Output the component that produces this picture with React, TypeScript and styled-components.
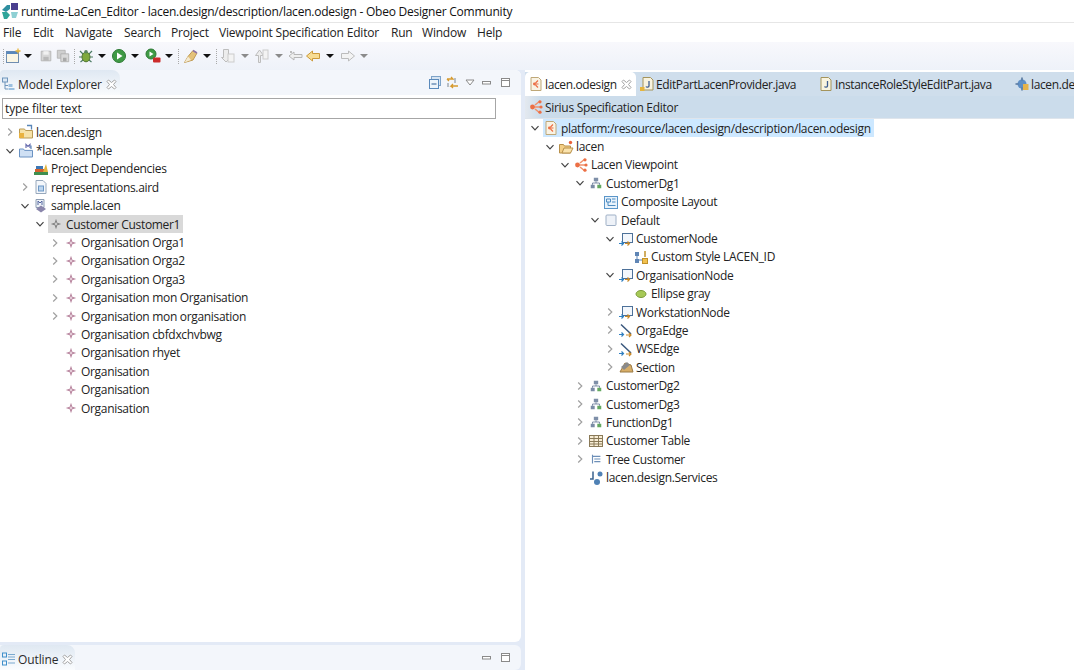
import React from "react";
import styled, { createGlobalStyle } from "styled-components";

const GlobalStyle = createGlobalStyle`
  html, body { margin: 0; padding: 0; background: #fff; }
  body { font-family: "Open Sans", "Liberation Sans", sans-serif; color: #1d1d1d; }
`;

const Window = styled.div`
  width: 1074px;
  height: 670px;
  display: flex;
  flex-direction: column;
  overflow: hidden;
  background: #e3eaf6;
`;

const TitleBar = styled.div`
  height: 22px;
  display: flex;
  align-items: center;
  gap: 2px;
  padding-left: 1px;
  background: #fff;
  font-size: 12px;
  letter-spacing: -0.23px;
  color: #111;
  white-space: nowrap;
`;

const MenuBar = styled.div`
  height: 19px;
  display: flex;
  align-items: center;
  padding-left: 3px;
  background: #fff;
  border-top: 1px solid #e6e6e6;
  font-size: 12px;
  letter-spacing: -0.2px;
  color: #222;
`;

const MenuItem = styled.span<{ $w: number }>`
  width: ${(p) => p.$w}px;
  white-space: nowrap;
`;

const Toolbar = styled.div`
  height: 28px;
  display: flex;
  align-items: center;
  background: linear-gradient(#f8f8fc, #eef2f9);
`;

const ToolSlot = styled.div<{ $w: number }>`
  width: ${(p) => p.$w}px;
  height: 16px;
  flex: none;
  display: flex;
  align-items: center;
  justify-content: center;
`;

const Separator = styled.div`
  width: 0;
  height: 15px;
  border-left: 1px dotted #a9a9a9;
`;

const DropArrow = styled.div<{ $off?: boolean }>`
  width: 0;
  height: 0;
  border-left: 4px solid transparent;
  border-right: 4px solid transparent;
  border-top: 4px solid ${(p) => (p.$off ? "#8b8b8b" : "#111")};
`;

const Workbench = styled.div`
  flex: 1;
  min-height: 0;
  display: flex;
  gap: 4px;
`;

const LeftColumn = styled.div`
  width: 521px;
  flex: none;
  display: flex;
  flex-direction: column;
  gap: 3px;
`;

const Panel = styled.section<{ $fill?: boolean }>`
  display: flex;
  flex-direction: column;
  flex: ${(p) => (p.$fill ? "1" : "none")};
  min-height: 0;
  min-width: 0;
  background: #fff;
  border-top-right-radius: 6px;
  border-bottom-right-radius: 6px;
  overflow: hidden;
`;

const ViewHeader = styled.div`
  height: 25px;
  flex: none;
  display: flex;
  align-items: stretch;
  background: #f3f6fb;
`;

const ViewTab = styled.div<{ $w: number }>`
  width: ${(p) => p.$w}px;
  flex: none;
  display: flex;
  align-items: center;
  gap: 1px;
  padding: 3px 0 0 1px;
  box-sizing: border-box;
  border-top-right-radius: 8px;
  border-top-left-radius: 4px;
  background: linear-gradient(#dfe8f2, #fafcfe);
  font-size: 12px;
  letter-spacing: -0.1px;
  color: #2b2b2b;
  white-space: nowrap;
`;

const ViewActions = styled.div`
  margin-left: auto;
  padding-right: 3px;
  display: flex;
  align-items: center;
`;

const ActionSlot = styled.div<{ $w: number }>`
  width: ${(p) => p.$w}px;
  display: flex;
  justify-content: center;
`;

const CloseMark = styled.span`
  margin-left: 3px;
  display: flex;
`;

const FilterRow = styled.div`
  padding: 3px 25px 0 2px;
  flex: none;
`;

const FilterInput = styled.div`
  height: 19px;
  border: 1px solid #a6a6a6;
  padding-left: 2px;
  font-size: 12px;
  line-height: 20px;
  letter-spacing: -0.1px;
  color: #222;
`;

const TreeList = styled.div<{ $top: number }>`
  padding-top: ${(p) => p.$top}px;
  flex: 1;
  min-height: 0;
`;

const Row = styled.div<{ $level: number; $base: number }>`
  height: 18.4px;
  display: flex;
  align-items: center;
  padding-left: ${(p) => p.$base + p.$level * 15}px;
  font-size: 12px;
  letter-spacing: -0.31px;
  color: #232323;
  white-space: nowrap;
`;

const Twisty = styled.span`
  width: 12px;
  height: 12px;
  margin-right: 2px;
  flex: none;
  display: flex;
  align-items: center;
  justify-content: center;
`;

const RowBody = styled.span<{ $sel?: "gray" | "blue" }>`
  display: flex;
  align-items: center;
  gap: 3px;
  height: 18px;
  padding: 0 3px 0 1px;
  background: ${(p) =>
    p.$sel === "gray" ? "#d9d9d9" : p.$sel === "blue" ? "#cde8ff" : "transparent"};
`;

const RowIcon = styled.span`
  width: 14px;
  flex: none;
  display: flex;
  justify-content: center;
`;

const EditorArea = styled.section`
  flex: 1;
  min-width: 0;
  display: flex;
  flex-direction: column;
  background: #fff;
  overflow: hidden;
`;

const TabStrip = styled.div`
  height: 24px;
  margin-top: 2px;
  flex: none;
  display: flex;
  background: #cfdeec;
`;

const EditorTab = styled.div<{ $active?: boolean; $w: number }>`
  width: ${(p) => p.$w}px;
  flex: none;
  display: flex;
  align-items: center;
  gap: 1px;
  padding-left: 3px;
  box-sizing: border-box;
  font-size: 12px;
  letter-spacing: -0.38px;
  color: #222;
  white-space: nowrap;
  background: ${(p) => (p.$active ? "#fff" : "transparent")};
  border-top-left-radius: ${(p) => (p.$active ? 5 : 0)}px;
  border-top-right-radius: ${(p) => (p.$active ? 5 : 0)}px;
`;

const FormHeader = styled.div`
  height: 22px;
  flex: none;
  display: flex;
  align-items: center;
  gap: 1px;
  padding-left: 3px;
  background: linear-gradient(90deg, #e4e9ef 0, #cbdceb 16px, #cbdceb 100%);
  border-bottom: 1px solid #dfe5ec;
  font-size: 12px;
  letter-spacing: -0.3px;
  color: #222;
`;

const Ic = ({ children, size = 16 }: { children: React.ReactNode; size?: number }) => (
  <svg width={size} height={size} viewBox="0 0 16 16" style={{ flex: "none" }}>
    {children}
  </svg>
);

const Chevron = ({ open }: { open?: boolean }) => (
  <svg width="10" height="10" viewBox="0 0 10 10">
    <path
      d={open ? "M1.5 3.2 5 6.8 8.5 3.2" : "M3.2 1.5 6.8 5 3.2 8.5"}
      fill="none"
      stroke={open ? "#444" : "#a0a0a0"}
      strokeWidth="1.2"
    />
  </svg>
);

const Sirius = () => (
  <Ic>
    <path d="M12 2 7 6M12 14 7 10M3 8h9" stroke="#f0916c" strokeWidth="1.6" fill="none" />
    <circle cx="4.5" cy="8" r="2.4" fill="#ec6f45" />
    <circle cx="12" cy="2.8" r="1.6" fill="#ec6f45" />
    <circle cx="13" cy="8" r="1.6" fill="#ec6f45" />
    <circle cx="12" cy="13.2" r="1.6" fill="#ec6f45" />
  </Ic>
);

const STAR = "M8 2 9.5 6.5 14 8 9.5 9.5 8 14 6.5 9.5 2 8 6.5 6.5z";

const icons: Record<string, React.ReactNode> = {
  project: (
    <Ic>
      <path d="M1.5 5h5l1 1.5h7V14h-13z" fill="#f6e2a8" stroke="#b99a55" />
      <path d="M9 1.5h4.500v4" fill="none" stroke="#5a86b8" strokeWidth="1.3" />
      <rect x="1" y="9" width="5" height="5" fill="#e9b23f" />
    </Ic>
  ),
  modelProject: (
    <Ic>
      <path d="M1.5 6h4l1 1.4h8V14h-13z" fill="#cfe0f4" stroke="#6a92c2" />
      <path d="M8 5V1.500l2 2 2-2V5" fill="none" stroke="#6a6fb0" strokeWidth="1.2" />
      <path d="M13 2.500V6" stroke="#5a86b8" strokeWidth="1.2" />
    </Ic>
  ),
  deps: (
    <Ic>
      <rect x="1" y="11" width="14" height="3" fill="#3f8f4f" />
      <rect x="2" y="8" width="9" height="3" fill="#d4622f" />
      <rect x="3" y="5" width="7" height="3" fill="#3d77b5" />
      <path d="M10 11 13 3l2 8z" fill="#e3b33a" />
    </Ic>
  ),
  aird: (
    <Ic>
      <path d="M3 1.5h7l3 3v10H3z" fill="#f4f7fb" stroke="#97a8bc" />
      <rect x="5.5" y="7" width="5" height="5" fill="#bcd5ee" stroke="#6c97c5" />
    </Ic>
  ),
  model: (
    <Ic>
      <path d="M3 1.5h8v8H3z" fill="#eef2f7" stroke="#8c9db3" />
      <path d="M5 7V3l2 2 2-2v4" fill="none" stroke="#5566a0" />
      <path d="M8 7.5 13 11l-5 3.5L3 11z" fill="#8a86ab" />
    </Ic>
  ),
  customer: (
    <Ic size={14}>
      <path d={STAR} fill="#7d7d7d" />
      <circle cx="8" cy="8" r="1.6" fill="#c9c9c9" />
    </Ic>
  ),
  orga: (
    <Ic size={14}>
      <path d={STAR} fill="#b5809b" />
      <circle cx="8" cy="8" r="1.6" fill="#e4cbd7" />
    </Ic>
  ),
  odesign: (
    <Ic>
      <path d="M3 1.5h7.500L13 4v10.500H3z" fill="#f9f3e4" stroke="#bfa878" />
      <path d="M10 4.500 7.500 7M10 11.500 7.500 9M6 8h4.500" stroke="#ec6f45" strokeWidth="1.2" />
      <circle cx="6.4" cy="8" r="1.4" fill="#ec6f45" />
    </Ic>
  ),
  folder: (
    <Ic>
      <path d="M1.5 5.500h4l1 1.500h6V14h-11z" fill="#f3cf87" stroke="#b8904a" />
      <path d="M4 14 6 9h9l-2.500 5z" fill="#fae3ad" stroke="#b8904a" />
      <circle cx="12.5" cy="3.5" r="1.7" fill="#e8623a" />
    </Ic>
  ),
  sirius: <Sirius />,
  diagram: (
    <Ic size={14}>
      <rect x="5.5" y="2" width="5" height="4" fill="#7e8fa8" />
      <rect x="2" y="10" width="4.5" height="4" fill="#7a8ba5" />
      <rect x="9.5" y="10" width="4.5" height="4" fill="#63a860" />
      <path d="M4 10V8h8v2M8 6v2" fill="none" stroke="#6d7f9b" />
    </Ic>
  ),
  layout: (
    <Ic>
      <rect x="1.5" y="2.5" width="13" height="12" fill="#e8f2fb" stroke="#5b96c9" />
      <path d="M3.500 5h4v3h-4zM9 5h3.500M9 8h3.500M5 8v3.500h7.500" fill="none" stroke="#4d8cc2" />
    </Ic>
  ),
  layer: (
    <Ic>
      <rect x="3" y="3" width="10" height="10.5" rx="1" fill="#eef2f8" stroke="#9fb0c6" />
    </Ic>
  ),
  node: (
    <Ic>
      <rect x="4.5" y="2.5" width="10" height="9" fill="#f3f7fc" stroke="#4d7199" />
      <path d="M1 12.500h4M3.500 10.500 5.500 12.500 3.500 14.500" fill="none" stroke="#2f7fc1" strokeWidth="1.2" />
      <path d="M7 12.500h4M9.500 10.500 11.500 12.500 9.500 14.500" fill="none" stroke="#c98a2a" strokeWidth="1.2" />
    </Ic>
  ),
  customStyle: (
    <Ic>
      <rect x="2" y="3" width="4" height="4" fill="#5f85b5" />
      <rect x="2" y="10" width="4" height="4" fill="#5f85b5" />
      <path d="M4 7v3M6 11h3" stroke="#5f85b5" />
      <rect x="9.5" y="9.5" width="5" height="5" fill="#f2c14e" stroke="#c1922c" />
      <path d="M12 2v6" stroke="#c1922c" strokeWidth="1.5" />
    </Ic>
  ),
  ellipse: (
    <Ic>
      <ellipse cx="8" cy="8" rx="5" ry="3.5" fill="#a7c957" stroke="#7b9c3a" />
    </Ic>
  ),
  edge: (
    <Ic>
      <path d="M3 2.500 13 12" stroke="#39577d" strokeWidth="1.5" />
      <path d="M1 12.500h4M3.500 10.500 5.500 12.500 3.500 14.500" fill="none" stroke="#2f7fc1" strokeWidth="1.2" />
      <path d="M8 13h5M11 11 13 13 11 15" fill="none" stroke="#c98a2a" strokeWidth="1.2" />
    </Ic>
  ),
  section: (
    <Ic>
      <path d="M2 13 7 4l6 2 2 7z" fill="#d8ae68" stroke="#9a7a45" />
      <path d="M3 8 9 3l3 3-6 5z" fill="#8a8a8a" />
    </Ic>
  ),
  table: (
    <Ic>
      <rect x="1.5" y="2.5" width="13" height="11" fill="#f8edd5" stroke="#8a7a58" />
      <path d="M1.500 5.500h13M1.500 8.500h13M1.500 11h13M6 2.500v11M10.500 2.500v11" stroke="#8a7a58" />
    </Ic>
  ),
  tree: (
    <Ic size={14}>
      <path d="M4 3v10M4 5h9M6 8h7M6 11h7" stroke="#6d8fb8" strokeWidth="1.3" fill="none" />
    </Ic>
  ),
  services: (
    <Ic>
      <circle cx="9" cy="12" r="3" fill="#4f81b5" />
      <circle cx="12" cy="4" r="2.5" fill="#4f81b5" />
      <path d="M5 1.500v7.500H2" stroke="#39618f" strokeWidth="1.5" fill="none" />
    </Ic>
  ),
  outlineView: (
    <Ic>
      <rect x="1.5" y="2" width="4" height="4" fill="none" stroke="#3f8fcb" />
      <rect x="1.5" y="10" width="4" height="4" fill="none" stroke="#3f8fcb" />
      <path d="M7 3.500h7M7 6h7M7 8.500h7M7 12h7" stroke="#7aa9cf" />
    </Ic>
  ),
  explorer: (
    <Ic>
      <rect x="1.5" y="2" width="5" height="4" fill="#dce8f4" stroke="#6f95bb" />
      <path d="M4 6v7h3M4 9.500h3" stroke="#6f95bb" fill="none" />
      <rect x="7.5" y="8" width="4" height="3" fill="#9cc0e0" />
      <rect x="7.5" y="12" width="6" height="2" fill="#9cc0e0" />
    </Ic>
  ),
  java: (
    <Ic>
      <path d="M3 1.500h7.500L13 4v10.500H3z" fill="#f8f3df" stroke="#a4945c" />
      <path d="M9.500 5v5c0 1.500-2.500 1.500-3 .5" fill="none" stroke="#3d5c90" strokeWidth="1.3" />
    </Ic>
  ),
  javaWarn: (
    <Ic>
      <path d="M4 1.500h7.500L14 4v10H4z" fill="#f8f3df" stroke="#a4945c" />
      <path d="M10 5v5c0 1.500-2.500 1.500-3 .5" fill="none" stroke="#3d5c90" strokeWidth="1.3" />
      <rect x="1" y="11" width="4.5" height="4" fill="#e5b53f" />
    </Ic>
  ),
  plugin: (
    <Ic>
      <circle cx="8" cy="8" r="4.5" fill="#5f8fc5" />
      <path d="M8 1.500v3M8 11.500v3M1.500 8h3" stroke="#54769e" strokeWidth="1.6" />
      <rect x="9" y="8" width="5.5" height="6" fill="#e6b34a" />
    </Ic>
  ),
};

const CloseIcon = () => (
  <svg width="11" height="11" viewBox="0 0 11 11">
    <path
      d="M1 2.500 2.500 1 5.500 3.500 8.500 1 10 2.500 7.500 5.500 10 8.500 8.500 10 5.500 7.500 2.500 10 1 8.500 3.500 5.500z"
      fill="#fff"
      stroke="#a2a2a2"
    />
  </svg>
);

const MinIcon = () => (
  <svg width="11" height="8" viewBox="0 0 11 8">
    <rect x="1.5" y="2.5" width="8" height="2.5" fill="#fff" stroke="#8a8a8a" />
  </svg>
);

const MaxIcon = () => (
  <svg width="11" height="11" viewBox="0 0 11 11">
    <rect x="1.5" y="1.5" width="8" height="8" fill="#fff" stroke="#8a8a8a" />
    <path d="M1.500 3.500h8" stroke="#8a8a8a" />
  </svg>
);

const ViewMenuIcon = () => (
  <svg width="10" height="7" viewBox="0 0 10 7">
    <path d="M1 1h8L5 6z" fill="#fff" stroke="#8a8a8a" />
  </svg>
);

const toolIcons: Record<string, React.ReactNode> = {
  newFile: (
    <Ic>
      <rect x="1.5" y="3.5" width="12" height="11" fill="#fbf6e4" stroke="#6f8db0" />
      <path d="M1.500 3.500h12v2.500h-12z" fill="#5a88bc" />
      <path d="M13 .5v5M10.500 3h5" stroke="#e7b53c" strokeWidth="1.3" />
    </Ic>
  ),
  save: (
    <Ic size={14}>
      <path d="M2.500 2.500h11v11h-11z" fill="#d6d6d6" stroke="#b4b4b4" />
      <rect x="5" y="2.5" width="6" height="4" fill="#f1f1f1" />
      <rect x="5" y="9" width="6" height="4.5" fill="#b9b9b9" />
    </Ic>
  ),
  saveAll: (
    <Ic size={14}>
      <path d="M1.500 1.500h9v9h-9z" fill="#cfcfcf" stroke="#b4b4b4" />
      <path d="M5.500 5.500h9v9h-9z" fill="#d9d9d9" stroke="#b0b0b0" />
      <rect x="8" y="10" width="4" height="4" fill="#a9a9a9" />
    </Ic>
  ),
  debug: (
    <Ic>
      <path d="M2 3 5 6M14 3 11 6M1 9h3M12 9h3M2.500 14 5 12M13.500 14 11 12" stroke="#4b7a63" strokeWidth="1.2" />
      <ellipse cx="8" cy="9" rx="4" ry="4.8" fill="#7fa93d" stroke="#4d7430" />
      <circle cx="8" cy="3.8" r="1.8" fill="#5a8560" />
    </Ic>
  ),
  run: (
    <Ic>
      <circle cx="8" cy="8" r="6.5" fill="#3f9a45" stroke="#2e7a35" />
      <path d="M6 4.500v7L11.500 8z" fill="#fff" />
    </Ic>
  ),
  runExt: (
    <Ic>
      <circle cx="6" cy="6" r="5" fill="#3f9a45" stroke="#2e7a35" />
      <path d="M4.500 3.500v5L8.500 6z" fill="#fff" />
      <rect x="8" y="9.5" width="7.5" height="5" rx="1" fill="#cc2b2b" />
    </Ic>
  ),
  marker: (
    <Ic>
      <path d="M1.500 14.500 5 8.500l5-6 4 2.500-4 7z" fill="#e4c27a" stroke="#c09a52" />
      <path d="M1.500 14.500 5 8.500 8 12z" fill="#f4ead2" />
      <path d="M10 2.500l4 2.500" stroke="#8f74a8" strokeWidth="1.5" />
    </Ic>
  ),
  nextAnn: (
    <Ic>
      <path d="M4.500 1.500h5v8h2L7 14 2.500 9.500h2z" fill="#ededed" stroke="#bdbdbd" />
      <rect x="9" y="6" width="6" height="8" fill="#f3f3f3" stroke="#ccc" />
    </Ic>
  ),
  prevAnn: (
    <Ic>
      <path d="M5.500 14.500v-7h-3L6.500 2l4 5.500h-3v7z" fill="#ededed" stroke="#bdbdbd" />
      <rect x="10" y="2" width="5" height="9" fill="#f3f3f3" stroke="#ccc" />
    </Ic>
  ),
  lastEdit: (
    <Ic>
      <path d="M1 8l5-4v2.500h8v3H6V12z" fill="#efefef" stroke="#b6b6b6" />
      <path d="M2 3h2v2H2z" fill="#bdbdbd" />
    </Ic>
  ),
  back: (
    <Ic>
      <path d="M1.500 8 7.500 3v2.500h7v5h-7V13z" fill="#f7dc93" stroke="#cc9a3a" />
    </Ic>
  ),
  forward: (
    <Ic>
      <path d="M14.500 8 8.500 3v2.500h-7v5h7V13z" fill="#f3f3f3" stroke="#bcbcbc" />
    </Ic>
  ),
};

type Tool = { w: number; icon?: string; sep?: boolean; arrow?: boolean; off?: boolean };

const tools: Tool[] = [
  { w: 6, sep: true },
  { w: 14, icon: "newFile" },
  { w: 16, arrow: true },
  { w: 20, icon: "save" },
  { w: 14, icon: "saveAll" },
  { w: 8, sep: true },
  { w: 16, icon: "debug" },
  { w: 16, arrow: true },
  { w: 18, icon: "run" },
  { w: 14, arrow: true },
  { w: 22, icon: "runExt" },
  { w: 10, arrow: true },
  { w: 8, sep: true },
  { w: 18, icon: "marker" },
  { w: 14, arrow: true },
  { w: 4, sep: true },
  { w: 18, icon: "nextAnn" },
  { w: 18, arrow: true, off: true },
  { w: 14, icon: "prevAnn" },
  { w: 22, arrow: true, off: true },
  { w: 12, icon: "lastEdit" },
  { w: 22, icon: "back" },
  { w: 12, arrow: true },
  { w: 24, icon: "forward" },
  { w: 8, arrow: true, off: true },
];

const menus: [string, number][] = [
  ["File", 30],
  ["Edit", 32],
  ["Navigate", 59],
  ["Search", 47],
  ["Project", 48],
  ["Viewpoint Specification Editor", 172],
  ["Run", 31],
  ["Window", 55],
  ["Help", 40],
];

type Node = {
  level: number;
  label: string;
  icon?: string;
  twisty?: "open" | "closed";
  sel?: "gray" | "blue";
};

const orga = (label: string, closed = true): Node => ({
  level: 3,
  label,
  icon: "orga",
  twisty: closed ? "closed" : undefined,
});

const explorerTree: Node[] = [
  { level: 0, label: "lacen.design", icon: "project", twisty: "closed" },
  { level: 0, label: "*lacen.sample", icon: "modelProject", twisty: "open" },
  { level: 1, label: "Project Dependencies", icon: "deps" },
  { level: 1, label: "representations.aird", icon: "aird", twisty: "closed" },
  { level: 1, label: "sample.lacen", icon: "model", twisty: "open" },
  { level: 2, label: "Customer Customer1", icon: "customer", twisty: "open", sel: "gray" },
  orga("Organisation Orga1"),
  orga("Organisation Orga2"),
  orga("Organisation Orga3"),
  orga("Organisation mon Organisation"),
  orga("Organisation mon organisation"),
  orga("Organisation cbfdxchvbwg", false),
  orga("Organisation rhyet", false),
  orga("Organisation", false),
  orga("Organisation", false),
  orga("Organisation", false),
];

const specTree: Node[] = [
  { level: 0, label: "platform:/resource/lacen.design/description/lacen.odesign", icon: "odesign", twisty: "open", sel: "blue" },
  { level: 1, label: "lacen", icon: "folder", twisty: "open" },
  { level: 2, label: "Lacen Viewpoint", icon: "sirius", twisty: "open" },
  { level: 3, label: "CustomerDg1", icon: "diagram", twisty: "open" },
  { level: 4, label: "Composite Layout", icon: "layout" },
  { level: 4, label: "Default", icon: "layer", twisty: "open" },
  { level: 5, label: "CustomerNode", icon: "node", twisty: "open" },
  { level: 6, label: "Custom Style LACEN_ID", icon: "customStyle" },
  { level: 5, label: "OrganisationNode", icon: "node", twisty: "open" },
  { level: 6, label: "Ellipse gray", icon: "ellipse" },
  { level: 5, label: "WorkstationNode", icon: "node", twisty: "closed" },
  { level: 5, label: "OrgaEdge", icon: "edge", twisty: "closed" },
  { level: 5, label: "WSEdge", icon: "edge", twisty: "closed" },
  { level: 5, label: "Section", icon: "section", twisty: "closed" },
  { level: 3, label: "CustomerDg2", icon: "diagram", twisty: "closed" },
  { level: 3, label: "CustomerDg3", icon: "diagram", twisty: "closed" },
  { level: 3, label: "FunctionDg1", icon: "diagram", twisty: "closed" },
  { level: 3, label: "Customer Table", icon: "table", twisty: "closed" },
  { level: 3, label: "Tree Customer", icon: "tree", twisty: "closed" },
  { level: 3, label: "lacen.design.Services", icon: "services" },
];

const Tree = ({ nodes, base, top }: { nodes: Node[]; base: number; top: number }) => (
  <TreeList $top={top}>
    {nodes.map((n, i) => (
      <Row key={i} $level={n.level} $base={base}>
        <Twisty>{n.twisty && <Chevron open={n.twisty === "open"} />}</Twisty>
        <RowBody $sel={n.sel}>
          <RowIcon>{n.icon && icons[n.icon]}</RowIcon>
          <span>{n.label}</span>
        </RowBody>
      </Row>
    ))}
  </TreeList>
);

const Logo = () => (
  <svg width="18" height="18" viewBox="0 0 18 18" style={{ flex: "none" }}>
    <rect x="10" y="1" width="7" height="7" fill="#4a3f8f" />
    <path d="M1 8 6 3h3v4L5 10z" fill="#2f8fa0" />
    <path d="M1 10h5l3 3-3 4H3z" fill="#2fa59a" />
    <path d="M10 10h7l-2 6h-4z" fill="#8fd0d4" />
  </svg>
);

const App = () => (
  <Window>
    <GlobalStyle />
    <TitleBar>
      <Logo />
      runtime-LaCen_Editor - lacen.design/description/lacen.odesign - Obeo Designer Community
    </TitleBar>
    <MenuBar>
      {menus.map(([m, w]) => (
        <MenuItem key={m} $w={w}>
          {m}
        </MenuItem>
      ))}
    </MenuBar>
    <Toolbar>
      {tools.map((t, i) => (
        <ToolSlot key={i} $w={t.w}>
          {t.sep && <Separator />}
          {t.arrow && <DropArrow $off={t.off} />}
          {t.icon && toolIcons[t.icon]}
        </ToolSlot>
      ))}
    </Toolbar>
    <Workbench>
      <LeftColumn>
        <Panel $fill>
          <ViewHeader>
            <ViewTab $w={120}>
              {icons.explorer}
              Model Explorer
              <CloseMark>
                <CloseIcon />
              </CloseMark>
            </ViewTab>
            <ViewActions>
              <ActionSlot $w={19}>
                <svg width="12" height="13" viewBox="0 0 12 13">
                  <rect x="2.5" y=".5" width="9" height="9" fill="#d6e4f2" stroke="#7ea3c8" />
                  <rect x=".5" y="3.5" width="9" height="9" fill="#eef4fa" stroke="#5b8abb" />
                  <path d="M2.500 8h5" stroke="#2c5f95" />
                </svg>
              </ActionSlot>
              <ActionSlot $w={16}>
                <svg width="13" height="14" viewBox="0 0 13 14">
                  <path d="M1 3h6L5 1M1 3l2 2" fill="none" stroke="#d69a2e" strokeWidth="1.3" />
                  <path d="M12 10H5l2-2M5 10l2 2" fill="none" stroke="#d69a2e" strokeWidth="1.3" />
                  <path d="M9 2v5M2 7v4" stroke="#7b8794" />
                </svg>
              </ActionSlot>
              <ActionSlot $w={20}>
                <ViewMenuIcon />
              </ActionSlot>
              <ActionSlot $w={13}>
                <MinIcon />
              </ActionSlot>
              <ActionSlot $w={25}>
                <MaxIcon />
              </ActionSlot>
            </ViewActions>
          </ViewHeader>
          <FilterRow>
            <FilterInput>type filter text</FilterInput>
          </FilterRow>
          <Tree nodes={explorerTree} base={4} top={4} />
        </Panel>
        <Panel>
          <ViewHeader>
            <ViewTab $w={75}>
              {icons.outlineView}
              Outline
              <CloseMark>
                <CloseIcon />
              </CloseMark>
            </ViewTab>
            <ViewActions>
              <ActionSlot $w={13}>
                <MinIcon />
              </ActionSlot>
              <ActionSlot $w={25}>
                <MaxIcon />
              </ActionSlot>
            </ViewActions>
          </ViewHeader>
        </Panel>
      </LeftColumn>
      <EditorArea>
        <TabStrip>
          <EditorTab $active $w={111}>
            {icons.odesign}
            lacen.odesign
            <CloseMark>
              <CloseIcon />
            </CloseMark>
          </EditorTab>
          <EditorTab $w={179}>
            {icons.javaWarn}
            EditPartLacenProvider.java
          </EditorTab>
          <EditorTab $w={196}>
            {icons.java}
            InstanceRoleStyleEditPart.java
          </EditorTab>
          <EditorTab $w={100}>
            {icons.plugin}
            lacen.design
          </EditorTab>
        </TabStrip>
        <FormHeader>
          <Sirius />
          Sirius Specification Editor
        </FormHeader>
        <Tree nodes={specTree} base={4} top={0} />
      </EditorArea>
    </Workbench>
  </Window>
);

export default App;
